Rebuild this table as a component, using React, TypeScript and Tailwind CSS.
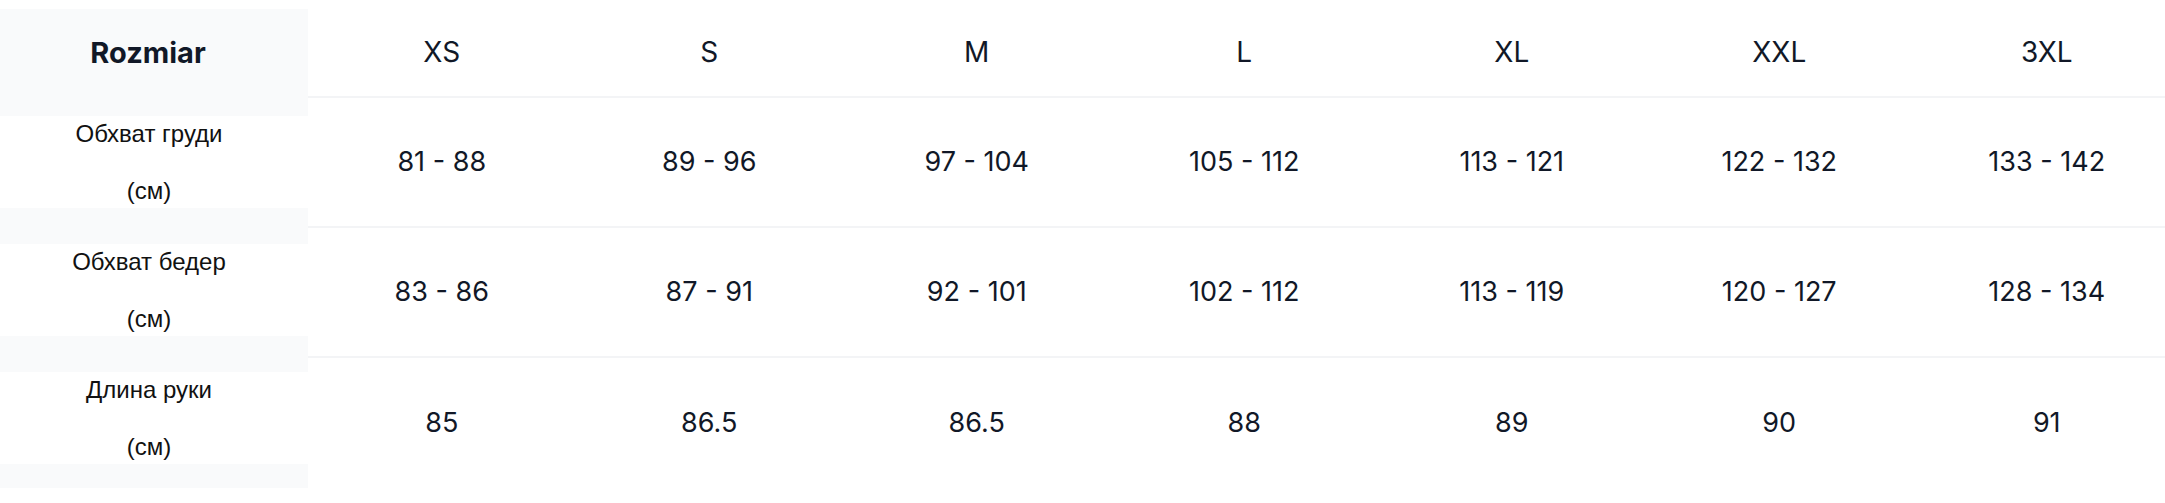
const sizes = ['XS', 'S', 'M', 'L', 'XL', 'XXL', '3XL'];

const rows = [
  { label: 'Обхват груди', values: ['81 - 88', '89 - 96', '97 - 104', '105 - 112', '113 - 121', '122 - 132', '133 - 142'] },
  { label: 'Обхват бедер', values: ['83 - 86', '87 - 91', '92 - 101', '102 - 112', '113 - 119', '120 - 127', '128 - 134'] },
  { label: 'Длина руки', values: ['85', '86.5', '86.5', '88', '89', '90', '91'] },
];

const numFont = { fontFamily: 'Inter, "Noto Sans", sans-serif' };

export default function App() {
  return (
    <div className="bg-white w-[2165px] h-[503px] pt-[9px] overflow-hidden">
      <div className="flex w-max">
        {/* Left label column */}
        <div className="w-[308px] shrink-0 bg-[#f9fafb] flex flex-col pb-[21px]">
          <div className="h-[87px] flex items-center justify-center pr-[12px]">
            <span className="text-[29px] font-bold text-[#111827]" style={numFont}>Rozmiar</span>
          </div>
          <div className="flex flex-col gap-[36px] pt-[20px]">
            {rows.map(r => (
              <div
                key={r.label}
                className="h-[92px] bg-white flex flex-col items-center pt-[5px] pr-[10px] text-[24px] text-[#111111]"
                style={{ fontFamily: '"Liberation Sans", Arial, sans-serif' }}
              >
                <span className="leading-[26px]">{r.label}</span>
                <span className="leading-[26px] mt-[31px]">(см)</span>
              </div>
            ))}
          </div>
        </div>

        {/* Size columns */}
        <div className="flex flex-col text-[#111827]" style={numFont}>
          <div className="grid grid-cols-[repeat(7,267.5px)] h-[89px] border-b-2 border-[#f3f4f6]">
            {sizes.map(s => (
              <div key={s} className="flex items-center justify-center text-[28px] pb-[2px]">{s}</div>
            ))}
          </div>
          {rows.map((r, i) => (
            <div
              key={r.label}
              className={i < rows.length - 1 ? 'grid grid-cols-[repeat(7,267.5px)] h-[130px] border-b-2 border-[#f3f4f6]' : 'grid grid-cols-[repeat(7,267.5px)] h-[130px]'}
            >
              {r.values.map((v, j) => (
                <div key={j} className="flex items-center justify-center text-[27px]">{v}</div>
              ))}
            </div>
          ))}
        </div>
      </div>
    </div>
  );
}
